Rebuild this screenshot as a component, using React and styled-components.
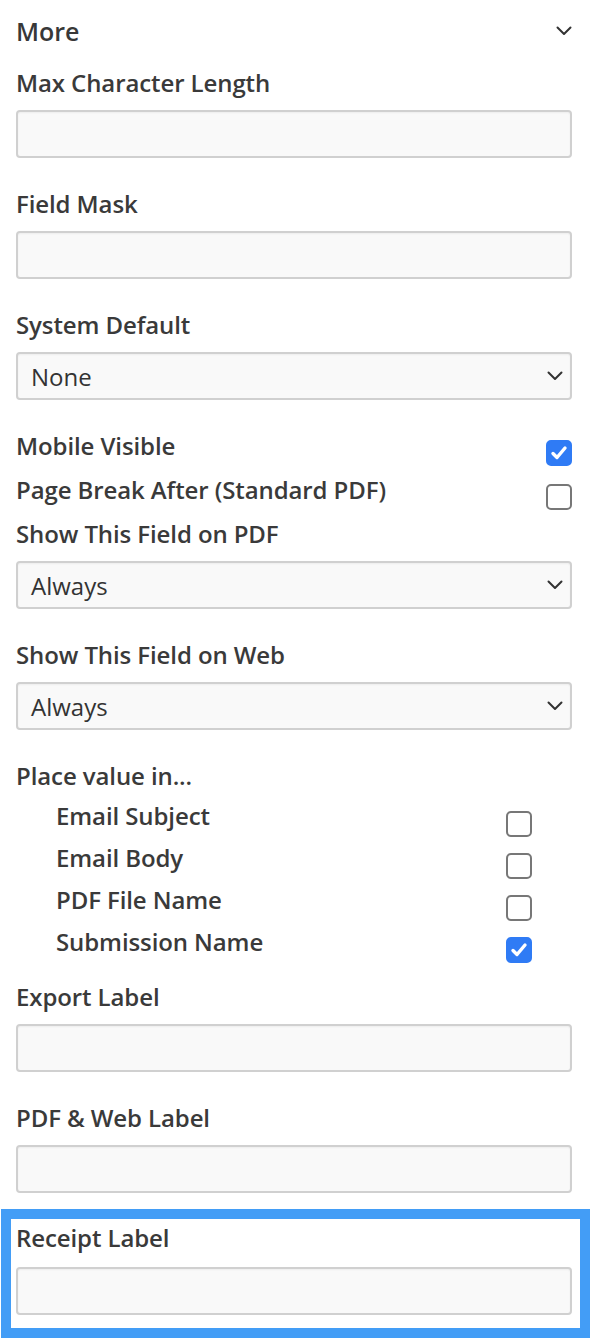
import React from 'react';
import styled, { createGlobalStyle } from 'styled-components';

const GlobalStyle = createGlobalStyle`
  * {
    box-sizing: border-box;
  }
  body {
    margin: 0;
    background: #fff;
    font-family: 'Open Sans', 'Liberation Sans', sans-serif;
    color: #3d3d3d;
  }
`;

const Page = styled.div`
  width: 590px;
  padding: 16px 18px 0 16px;
  display: flex;
  flex-direction: column;
`;

const Header = styled.div`
  display: flex;
  align-items: center;
  justify-content: space-between;
  height: 30px;
  margin-bottom: 24px;
`;

const Title = styled.h2`
  margin: 0;
  font-size: 25px;
  line-height: 30px;
  font-weight: 600;
  color: #383838;
`;

const Field = styled.div`
  display: flex;
  flex-direction: column;
  margin-bottom: ${(p) => p.$after ?? 33}px;
`;

const Label = styled.div`
  font-size: 24px;
  line-height: 26px;
  font-weight: 600;
  letter-spacing: -0.1px;
  color: #3a3a3a;
  margin-bottom: ${(p) => p.$gap ?? 14}px;
`;

const TextBox = styled.div`
  height: 48px;
  border: 2px solid #d0d0d0;
  border-radius: 4px;
  background: #f9f9f9;
  box-shadow: inset 0 1px 2px rgba(0, 0, 0, 0.05);
`;

const SelectBox = styled(TextBox)`
  display: flex;
  align-items: center;
  justify-content: space-between;
  padding: 0 7px 0 13px;
  font-size: 24px;
  color: #333;
`;

const CheckRow = styled.div`
  display: flex;
  justify-content: space-between;
  align-items: flex-start;
  height: ${(p) => p.$height}px;
  padding: 0 ${(p) => p.$inset}px;
`;

const RowText = styled.span`
  font-size: 24px;
  line-height: 26px;
  font-weight: 600;
  letter-spacing: -0.1px;
  color: #3a3a3a;
`;

const Box = styled.span`
  width: 26px;
  height: 26px;
  margin-top: ${(p) => p.$top}px;
  border-radius: 5px;
  border: 2px solid ${(p) => (p.$checked ? '#2f7bf5' : '#777')};
  background: ${(p) => (p.$checked ? '#2f7bf5' : '#fff')};
  display: flex;
  align-items: center;
  justify-content: center;
`;

const SubList = styled.div`
  display: flex;
  flex-direction: column;
  margin-bottom: 13px;
`;

const Highlight = styled.div`
  margin: 0 -18px 0 -15px;
  border: 10px solid #439df6;
  padding: 6px 8px 13px 5px;
`;

const Chevron = () => (
  <svg width="16" height="10" viewBox="0 0 16 10" fill="none">
    <polyline
      points="1.5,1.5 8,8 14.5,1.5"
      stroke="#333"
      strokeWidth="2"
      strokeLinecap="round"
      strokeLinejoin="round"
    />
  </svg>
);

const Check = ({ checked, top }) => (
  <Box $checked={checked} $top={top}>
    {checked && (
      <svg width="18" height="16" viewBox="0 0 18 16" fill="none">
        <polyline
          points="3,8.5 7,12.5 15,3"
          stroke="#fff"
          strokeWidth="3.4"
          strokeLinecap="round"
          strokeLinejoin="round"
        />
      </svg>
    )}
  </Box>
);

const InputField = ({ label, after }) => (
  <Field $after={after}>
    <Label>{label}</Label>
    <TextBox />
  </Field>
);

const SelectField = ({ label, value }) => (
  <Field>
    <Label>{label}</Label>
    <SelectBox>
      <span>{value}</span>
      <Chevron />
    </SelectBox>
  </Field>
);

const places = [
  ['Email Subject', false],
  ['Email Body', false],
  ['PDF File Name', false],
  ['Submission Name', true],
];

export default function App() {
  return (
    <>
      <GlobalStyle />
      <Page>
        <Header>
          <Title>More</Title>
          <Chevron />
        </Header>

        <InputField label="Max Character Length" />
        <InputField label="Field Mask" />
        <SelectField label="System Default" value="None" />

        <CheckRow $height={44} $inset={0}>
          <RowText>Mobile Visible</RowText>
          <Check checked top={7} />
        </CheckRow>
        <CheckRow $height={44} $inset={0}>
          <RowText>Page Break After (Standard PDF)</RowText>
          <Check top={7} />
        </CheckRow>

        <SelectField label="Show This Field on PDF" value="Always" />
        <SelectField label="Show This Field on Web" value="Always" />

        <Label>Place value in...</Label>
        <SubList>
          {places.map(([name, on]) => (
            <CheckRow key={name} $height={42} $inset={40}>
              <RowText>{name}</RowText>
              <Check checked={on} top={8} />
            </CheckRow>
          ))}
        </SubList>

        <InputField label="Export Label" />
        <InputField label="PDF &amp; Web Label" after={16} />

        <Highlight>
          <Label $gap={16}>Receipt Label</Label>
          <TextBox />
        </Highlight>
      </Page>
    </>
  );
}
